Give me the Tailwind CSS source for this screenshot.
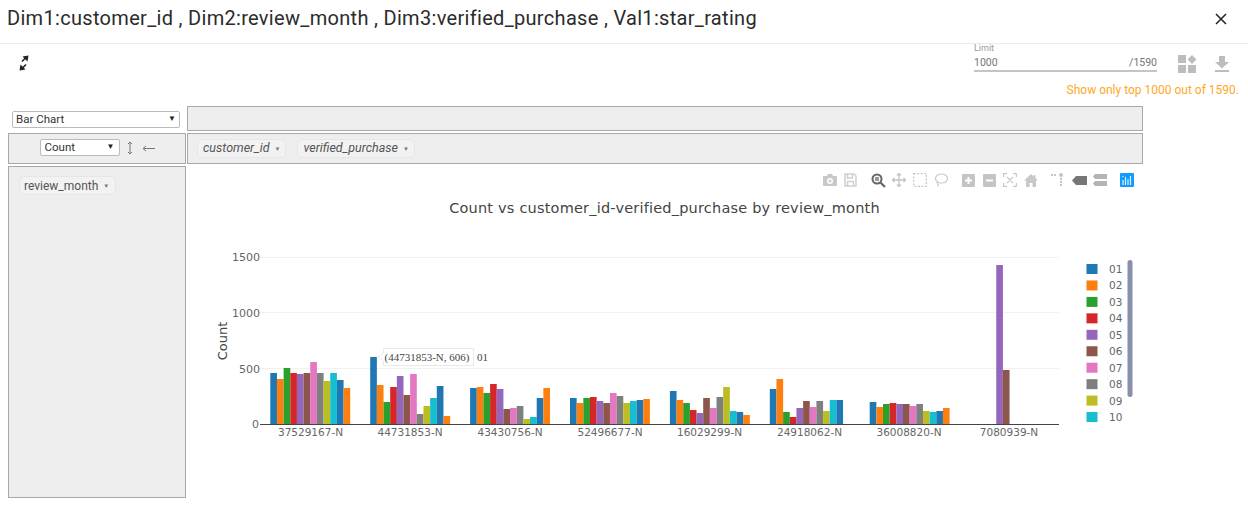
<!DOCTYPE html>
<html lang="en">
  <head>
    <meta charset="UTF-8" />
    <title>Bar Chart</title>
    <script src="https://cdn.jsdelivr.net/npm/@tailwindcss/browser@4"></script>
  </head>
  <body class="w-[1248px] h-[509px] overflow-hidden bg-white font-['Roboto',sans-serif] text-[#333]">
    <!-- header -->
    <div class="h-[44px] flex items-center justify-between pl-[7px] pr-[20px] border-b border-[#ececec]">
      <h1 class="text-[20px] leading-[36px] pb-[8px] tracking-[0.31px] text-[#2b2b2b]">Dim1:customer_id , Dim2:review_month , Dim3:verified_purchase , Val1:star_rating</h1>
      <svg class="w-[14px] h-[14px] mb-[6px]" viewBox="0 0 14 14" fill="none" stroke="#222" stroke-width="1.5"><path d="M2 2l10 10M12 2L2 12" /></svg>
    </div>

    <!-- toolbar -->
    <div class="h-[62px]">
      <div class="h-[36px] flex items-start justify-between pl-[19px] pr-[19px]">
        <svg class="w-[10px] h-[16px] mt-[11px]" viewBox="0 0 10 16" fill="#222" stroke="#222">
          <path stroke="none" d="M9.500 0.500L3.500 1.500l5 5z" />
          <path stroke-width="1.600" d="M6.500 3L3 6.500" />
          <path stroke="none" d="M0.500 15.500l6-1-5-5z" />
          <path stroke-width="1.600" d="M3.500 13L7 9.500" />
        </svg>
        <div class="flex items-start">
          <div class="w-[183px] h-[28px] border-b-2 border-[#c4c4c4] relative text-[#757575]">
            <div class="text-[9px] leading-[10px] mt-[-1px] text-[#9a9a9a]">Limit</div>
            <div class="flex justify-between text-[10.5px] leading-[14px] mt-[3px]">
              <span>1000</span><span>/1590</span>
            </div>
          </div>
          <svg class="w-[18px] h-[18px] ml-[21px] mt-[11px]" viewBox="0 0 18 18" fill="#bdbdbd">
            <rect x="0" y="0" width="8" height="8" />
            <rect x="0" y="10" width="8" height="8" />
            <rect x="10" y="10" width="8" height="8" />
            <path d="M14 0l4.500 4.500-4.500 4.500-4.500-4.500z" />
          </svg>
          <svg class="w-[14px] h-[16px] ml-[19px] mt-[12px]" viewBox="0 0 14 16" fill="#bdbdbd">
            <path d="M4 0h6v6h4l-7 6.500L0 6h4z" />
            <rect x="0" y="14" width="14" height="2" />
          </svg>
        </div>
      </div>
      <div class="text-right pr-[9px] text-[12px] leading-[20px] text-[#ffa726]">Show only top 1000 out of 1590.</div>
    </div>

    <!-- pivot grid -->
    <div class="ml-[8px] w-[1135px] grid grid-cols-[178px_956px] grid-rows-[25px_31px_332px] gap-x-[1px] gap-y-[2px]">
      <div class="pl-[4px] pt-[5px]">
        <div class="relative w-[168px] h-[17px]">
          <select class="block appearance-none w-full h-full bg-white border border-[#bbb] rounded-[2px] pl-[3px] text-[11.5px] leading-[15px] text-[#333]">
            <option>Bar Chart</option>
          </select>
          <span class="absolute right-[4px] top-[3px] text-[8px] leading-[10px] text-[#222]">▼</span>
        </div>
      </div>
      <div class="bg-[#eeeeee] border border-[#a8a8a8]"></div>

      <div class="bg-[#eeeeee] border border-[#a8a8a8] flex items-center justify-center gap-[7px]">
        <div class="relative w-[80px] h-[17px] mb-[2px]">
          <select class="block appearance-none w-full h-full bg-white border border-[#bbb] rounded-[2px] pl-[4px] text-[11.5px] leading-[15px] text-[#333]">
            <option>Count</option>
          </select>
          <span class="absolute right-[5px] top-[3px] text-[8px] leading-[10px] text-[#222]">▼</span>
        </div>
        <svg class="w-[6px] h-[14px] mb-[2px]" viewBox="0 0 6 14" fill="none" stroke="#777" stroke-width="1"><path d="M3 1v12M1 3l2-2 2 2M1 11l2 2 2-2" /></svg>
        <svg class="w-[13px] h-[7px] ml-[2px] mb-[1px]" viewBox="0 0 13 7" fill="none" stroke="#777" stroke-width="1"><path d="M13 3.500H1M4 1L1 3.500 4 6" /></svg>
      </div>
      <div class="bg-[#eeeeee] border border-[#a8a8a8] flex items-center gap-[11px] pl-[9px]">
        <div class="flex items-center h-[19px] pl-[5px] pr-[5px] gap-[5px] bg-[#f2f2f2] border border-[#e6e6e6] rounded-[5px] text-[12.5px] italic text-[#555]">customer_id <span class="not-italic text-[6px] text-[#777]">▼</span></div>
        <div class="flex items-center h-[19px] pl-[5px] pr-[5px] gap-[5px] bg-[#f2f2f2] border border-[#e6e6e6] rounded-[5px] text-[12.5px] italic text-[#555]">verified_purchase <span class="not-italic text-[6px] text-[#777]">▼</span></div>
      </div>

      <div class="bg-[#eeeeee] border border-[#a8a8a8] pl-[10px] pt-[9px]">
        <div class="flex w-fit items-center h-[19px] pl-[4px] pr-[6px] gap-[5px] bg-[#f2f2f2] border border-[#e6e6e6] rounded-[5px] text-[12px] text-[#555]">review_month <span class="text-[6px] text-[#777]">▼</span></div>
      </div>

      <!-- chart -->
      <div class="relative">
        <svg id="chart" class="block w-[956px] h-[332px]" viewBox="187 166 956 332" font-family="'DejaVu Sans', sans-serif">
          <g id="grid" stroke="#f1f1f1" stroke-width="1">
            <path d="M260 257.500H1059M260 312.500H1059M260 368.500H1059" />
          </g>
          <g id="bars"></g>
          <path d="M260 424.500H1059" stroke="#444" stroke-width="1" />
          <text x="664.500" y="213" text-anchor="middle" font-size="14.500" fill="#444" letter-spacing="0.2">Count vs customer_id-verified_purchase by review_month</text>
          <g font-size="11" fill="#666" text-anchor="end">
            <text x="260" y="261">1500</text>
            <text x="260" y="317">1000</text>
            <text x="260" y="373">500</text>
            <text x="259" y="428">0</text>
          </g>
          <g font-size="10.500" fill="#666" text-anchor="middle">
            <text x="310.500" y="436">37529167-N</text>
            <text x="410" y="436">44731853-N</text>
            <text x="510" y="436">43430756-N</text>
            <text x="610" y="436">52496677-N</text>
            <text x="709.500" y="436">16029299-N</text>
            <text x="809.500" y="436">24918062-N</text>
            <text x="909" y="436">36008820-N</text>
            <text x="1009" y="436">7080939-N</text>
          </g>
          <text transform="translate(227 341) rotate(-90)" text-anchor="middle" font-size="13" fill="#444">Count</text>
          <g id="legend" font-size="10.500" fill="#666"></g>
          <rect x="1127.500" y="260" width="5" height="137" rx="2.500" fill="#8790ab" />
          <!-- hover label -->
          <path d="M383.500 348.500H473.500V365.500H383.500V361L378 357L383.500 353Z" fill="#fff" stroke="#e8e8e8" />
          <text x="384.500" y="361" font-family="'Liberation Serif', serif" font-size="11" fill="#444">(44731853-N, 606)</text>
          <text x="477" y="361" font-family="'Liberation Serif', serif" font-size="11" fill="#444">01</text>
        </svg>

        <!-- modebar -->
        <div class="absolute top-[6px] left-[636px] h-[16px] flex items-center">
          <svg class="w-[14px] h-[14px]" viewBox="0 0 14 14" fill="#c8c8c8"><path fill-rule="evenodd" d="M1 3h3l1-2h4l1 2h3a1 1 0 0 1 1 1v8a1 1 0 0 1-1 1H1a1 1 0 0 1-1-1V4a1 1 0 0 1 1-1zm6 2a3 3 0 1 0 0 6 3 3 0 0 0 0-6zm0 1.500a1.500 1.500 0 1 1 0 3 1.500 1.500 0 0 1 0-3z" /></svg>
          <svg class="w-[13px] h-[14px] ml-[7px]" viewBox="0 0 13 14" fill="none" stroke="#d0d0d0" stroke-width="1.500"><path d="M1 1h9l2 2v10H1zM3.500 1v4h5V1M3.500 13V8.500h6V13" /></svg>
          <svg class="w-[15px] h-[15px] ml-[14px]" viewBox="0 0 15 15" fill="none"><circle cx="6" cy="6" r="4.500" stroke="#666" stroke-width="2" /><rect x="4" y="4" width="4" height="4" fill="#999" /><path d="M9.500 9.500L14 14" stroke="#666" stroke-width="2.200" /></svg>
          <svg class="w-[14px] h-[14px] ml-[6px]" viewBox="0 0 14 14" fill="none" stroke="#c4c4c4" stroke-width="1.300"><path d="M7 0.500v13M0.500 7h13M5 2.500L7 0.500l2 2M5 11.500l2 2 2-2M2.500 5L0.500 7l2 2M11.500 5l2 2-2 2" /></svg>
          <svg class="w-[14px] h-[14px] ml-[7px]" viewBox="0 0 14 14" fill="none" stroke="#c8c8c8" stroke-width="1.300" stroke-dasharray="2 1.500"><rect x="0.700" y="0.700" width="12.600" height="12.600" /></svg>
          <svg class="w-[14px] h-[14px] ml-[7px]" viewBox="0 0 14 14" fill="none" stroke="#c8c8c8" stroke-width="1.200"><ellipse cx="7.500" cy="5.500" rx="6" ry="4.500" /><path d="M3.500 9c-1 1 0 2 0.500 2.500S4 13 3.500 13.500" /></svg>
          <svg class="w-[13px] h-[13px] ml-[14px]" viewBox="0 0 13 13"><rect width="13" height="13" rx="1" fill="#c4c4c4" /><path d="M6.500 3v7M3 6.500h7" stroke="#fff" stroke-width="2" /></svg>
          <svg class="w-[13px] h-[13px] ml-[8px]" viewBox="0 0 13 13"><rect width="13" height="13" rx="1" fill="#c4c4c4" /><path d="M3 6.500h7" stroke="#fff" stroke-width="2" /></svg>
          <svg class="w-[14px] h-[14px] ml-[7px]" viewBox="0 0 14 14" fill="none" stroke="#c8c8c8" stroke-width="1.200"><path d="M0.600 4V0.600H4M10 0.600h3.400V4M13.400 10v3.400H10M4 13.400H0.600V10M4 4l6 6M10 4l-6 6" /></svg>
          <svg class="w-[14px] h-[13px] ml-[7px]" viewBox="0 0 14 13" fill="#c8c8c8"><path d="M7 0L0 6.500h2V13h3.500V9h3v4H12V6.500h2L11.500 4V1H10v1.500z" /></svg>
          <svg class="w-[12px] h-[14px] ml-[13px]" viewBox="0 0 12 14" fill="#c4c4c4"><rect x="0" y="1" width="2" height="2" /><rect x="3" y="1" width="2" height="2" /><circle cx="10" cy="2" r="2" /><rect x="9" y="5" width="2" height="2" /><rect x="9" y="8" width="2" height="2" /><rect x="9" y="11" width="2" height="2" /></svg>
          <svg class="w-[15px] h-[9px] ml-[9px]" viewBox="0 0 15 9" fill="#777"><path d="M4 0h11v9H4L0 4.500z" /></svg>
          <svg class="w-[14px] h-[12px] ml-[6px]" viewBox="0 0 14 12" fill="#b4b4b4"><path d="M2 0h12v5H2L0 2.500zM2 7h12v5H2L0 9.500z" /></svg>
          <svg class="w-[14px] h-[14px] ml-[13px]" viewBox="0 0 14 14"><rect width="14" height="14" rx="1" fill="#119dff" /><path d="M3 12V7M5.500 12V4M8 12V6M10.500 12V3M3 3v1" stroke="#fff" stroke-width="1.200" opacity="0.850" /></svg>
        </div>
      </div>
    </div>

    <script type="text/javascript">
      var colors = ["#1f77b4", "#ff7f0e", "#2ca02c", "#d62728", "#9467bd", "#8c564b", "#e377c2", "#7f7f7f", "#bcbd22", "#17becf"];
      // bar heights in pixels per group, one entry per review_month
      var groups = [
        [51, 45, 56, 51, 50, 51, 62, 51, 43, 51, 44, 36],
        [67, 39, 22, 37, 48, 29, 50, 10, 18, 26, 38, 8],
        [36, 37, 31, 40, 35, 15, 16, 18, 5, 7, 26, 36],
        [26, 21, 26, 27, 23, 21, 31, 28, 21, 23, 24, 25],
        [33, 24, 21, 14, 11, 26, 16, 27, 37, 13, 12, 9],
        [35, 45, 12, 7, 16, 23, 17, 23, 13, 24, 24, 0],
        [22, 17, 20, 21, 20, 20, 18, 20, 13, 12, 13, 16],
        [0, 0, 0, 0, 159, 54, 0, 0, 0, 0, 0, 0]
      ];
      var ns = "http://www.w3.org/2000/svg";
      var bars = document.getElementById("bars");
      var legend = document.getElementById("legend");

      groups.forEach(function (group, g) {
        group.forEach(function (h, i) {
          if (!h) return;
          var r = document.createElementNS(ns, "rect");
          r.setAttribute("x", 270.3 + g * 99.9 + i * 6.66);
          r.setAttribute("y", 424 - h);
          r.setAttribute("width", 6.66);
          r.setAttribute("height", h);
          r.setAttribute("fill", colors[i % 10]);
          bars.appendChild(r);
        });
      });

      for (var i = 0; i < 10; i++) {
        var y = 264 + i * 16.45;
        var s = document.createElementNS(ns, "rect");
        s.setAttribute("x", 1086.5);
        s.setAttribute("y", y);
        s.setAttribute("width", 11);
        s.setAttribute("height", 10);
        s.setAttribute("fill", colors[i]);
        legend.appendChild(s);
        var t = document.createElementNS(ns, "text");
        t.setAttribute("x", 1109);
        t.setAttribute("y", y + 9);
        t.textContent = i < 9 ? "0" + (i + 1) : "10";
        legend.appendChild(t);
      }
    </script>
  </body>
</html>
